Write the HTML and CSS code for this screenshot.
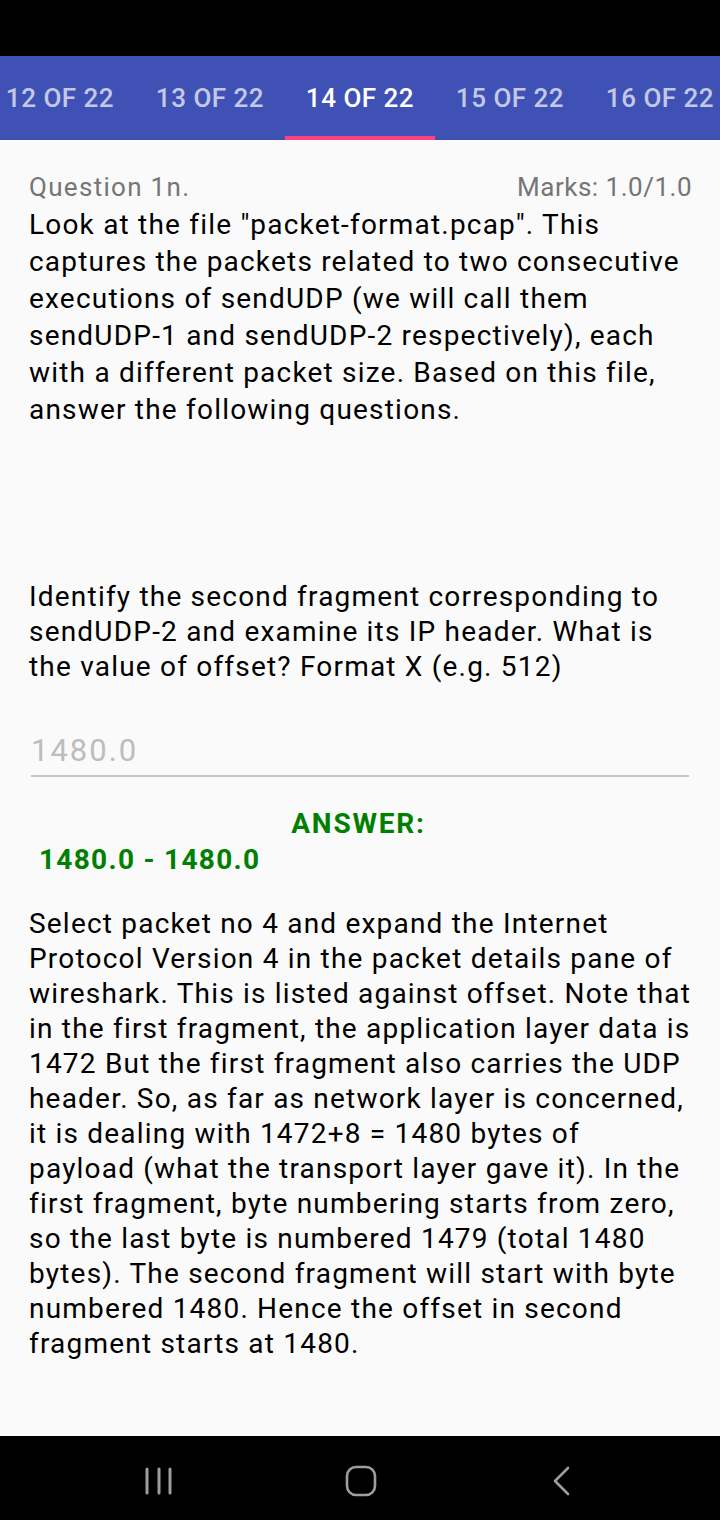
FILE: index.html
```html
<!DOCTYPE html>
<html>
<head>
<meta charset="utf-8">
<link rel="stylesheet" href="styles.css">
</head>
<body>
<div class="screen">
  <div class="statusbar"></div>
  <div class="tabs">
    <div class="tab">12 OF 22</div>
    <div class="tab">13 OF 22</div>
    <div class="tab active">14 OF 22</div>
    <div class="tab">15 OF 22</div>
    <div class="tab">16 OF 22</div>
  </div>
  <main class="content">
    <div class="qhead">
      <span class="qnum">Question 1n.</span>
      <span class="marks">Marks: 1.0/1.0</span>
    </div>
    <p class="intro">Look at the file "packet-format.pcap". This captures the packets related to two consecutive executions of sendUDP (we will call them sendUDP-1 and sendUDP-2 respectively), each with a different packet size. Based on this file, answer the following questions.</p>
    <p class="question">Identify the second fragment corresponding to sendUDP-2 and examine its IP header. What is the value of offset? Format X (e.g. 512)</p>
    <div class="field"><span class="hint">1480.0</span></div>
    <div class="answer-label">ANSWER:</div>
    <div class="answer-value">1480.0 - 1480.0</div>
    <p class="explain">Select packet no 4 and expand the Internet Protocol Version 4 in the packet details pane of wireshark. This is listed against offset. Note that in the first fragment, the application layer data is 1472 But the first fragment also carries the UDP header. So, as far as network layer is concerned, it is dealing with 1472+8 = 1480 bytes of payload (what the transport layer gave it). In the first fragment, byte numbering starts from zero, so the last byte is numbered 1479 (total 1480 bytes). The second fragment will start with byte numbered 1480. Hence the offset in second fragment starts at 1480.</p>
  </main>
  <nav class="navbar">
    <svg class="nav-icon recents" width="30" height="30" viewBox="0 0 30 30">
      <g stroke="#9e9e9e" stroke-width="3" stroke-linecap="round" fill="none">
        <line x1="3" y1="3" x2="3" y2="27"/>
        <line x1="15" y1="3" x2="15" y2="27"/>
        <line x1="26" y1="3" x2="26" y2="27"/>
      </g>
    </svg>
    <svg class="nav-icon home" width="32" height="32" viewBox="0 0 32 32">
      <rect x="2" y="2" width="28" height="28" rx="9" ry="9" stroke="#9e9e9e" stroke-width="2.6" fill="none"/>
    </svg>
    <svg class="nav-icon back" width="20" height="30" viewBox="0 0 20 30">
      <polyline points="16,2 3,15 16,28" stroke="#9e9e9e" stroke-width="2.6" stroke-linecap="round" stroke-linejoin="round" fill="none"/>
    </svg>
  </nav>
</div>
</body>
</html>
```
FILE: styles.css
```css
html, body {
  margin: 0;
  padding: 0;
}
body {
  font-family: Roboto, "Liberation Sans", sans-serif;
  background: #fafafa;
}
.screen {
  width: 720px;
  height: 1520px;
  display: flex;
  flex-direction: column;
  overflow: hidden;
}
.statusbar {
  height: 56px;
  background: #000;
  flex: none;
}
.tabs {
  height: 84px;
  background: #3f51b5;
  display: flex;
  flex: none;
  margin-left: -15px;
}
.tab {
  width: 150px;
  flex: none;
  display: flex;
  align-items: center;
  justify-content: center;
  font-size: 26px;
  font-weight: 500;
  letter-spacing: 0.5px;
  color: rgba(255,255,255,0.7);
  box-sizing: border-box;
  border-bottom: 4px solid transparent;
  padding-top: 4px;
}
.tab.active {
  color: #fff;
  border-bottom-color: #ff4081;
}
.content {
  flex: 1;
  background: #fafafa;
  padding: 32px 28px 0 29px;
  color: #000;
}
.qhead {
  display: flex;
  justify-content: space-between;
  align-items: baseline;
  color: #757575;
  font-size: 26px;
  line-height: 30px;
}
.qnum {
  letter-spacing: 1.3px;
}
.marks {
  letter-spacing: 0.5px;
}
.intro, .question, .explain {
  margin: 0;
  font-size: 28px;
  letter-spacing: 1.2px;
}
.intro {
  margin-top: 4px;
  line-height: 37px;
}
.question {
  margin-top: 151px;
  line-height: 35px;
}
.field {
  margin: 46px 3px 0 2px;
  border-bottom: 2px solid #c4c4c4;
  height: 47px;
  box-sizing: border-box;
  padding-bottom: 4px;
  display: flex;
  align-items: center;
}
.hint {
  color: #bdbdbd;
  font-size: 31px;
  letter-spacing: 2px;
}
.answer-label {
  margin-top: 29px;
  text-align: center;
  color: #008000;
  font-weight: 700;
  font-size: 28px;
  letter-spacing: 1.8px;
  line-height: 36px;
  margin-right: 4px;
}
.answer-value {
  color: #008000;
  font-weight: 700;
  font-size: 28px;
  letter-spacing: 1.3px;
  line-height: 36px;
  padding-left: 10px;
}
.explain {
  margin-top: 28px;
  line-height: 35px;
}
.navbar {
  height: 84px;
  background: #000;
  flex: none;
  display: flex;
  align-items: center;
  padding-top: 6px;
  box-sizing: border-box;
}
.recents {
  margin-left: 144px;
}
.home {
  margin-left: 171px;
}
.back {
  margin-left: 175px;
}
```
